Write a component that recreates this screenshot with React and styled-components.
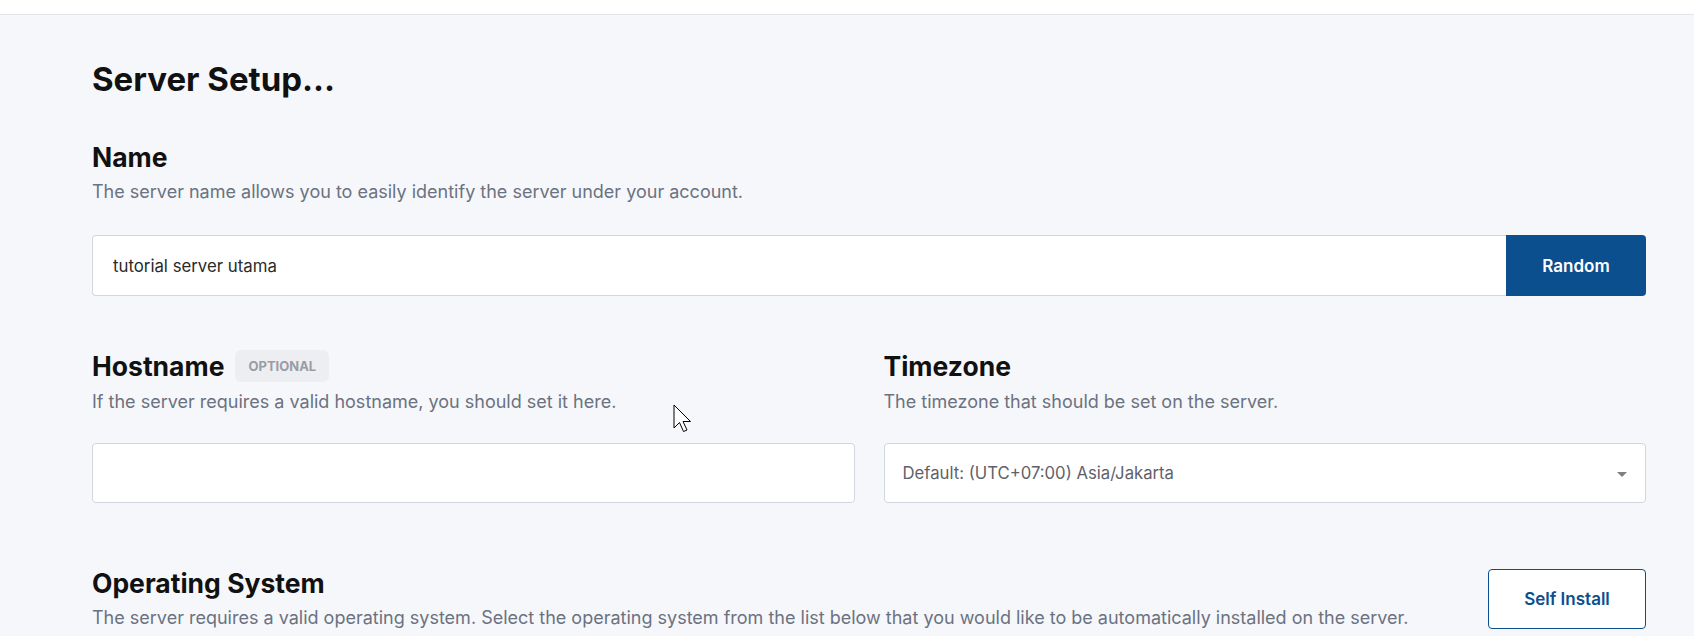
import React from "react";
import styled, { createGlobalStyle } from "styled-components";

const GlobalStyle = createGlobalStyle`
  html, body {
    margin: 0;
    padding: 0;
    background: #f6f7fb;
    font-family: Inter, "Noto Sans", sans-serif;
    color: #111111;
  }
  * { box-sizing: border-box; }
`;

const Page = styled.div`
  position: relative;
`;

const TopBar = styled.div`
  height: 15px;
  background: #ffffff;
  border-bottom: 1px solid #e2e4ea;
`;

const Main = styled.main`
  padding: 45px 48px 0 92px;
`;

const Title = styled.h1`
  margin: 0;
  font-size: 33px;
  line-height: 38px;
  font-weight: 700;
  color: #111111;
`;

const Section = styled.section`
  margin-top: ${(p) => p.$top}px;
`;

const HeaderRow = styled.div`
  display: flex;
  align-items: center;
  gap: 11px;
  height: ${(p) => (p.$tall ? "32px" : "auto")};
`;

const Heading = styled.h2`
  margin: 0;
  font-size: 26.5px;
  line-height: 29px;
  font-weight: 700;
  color: #111111;
`;

const Badge = styled.span`
  display: inline-flex;
  align-items: center;
  height: 32px;
  padding: 0 13px;
  border-radius: 6px;
  background: #eceef2;
  color: #9a9ca3;
  font-size: 13px;
  font-weight: 700;
`;

const Description = styled.p`
  margin: 8px 0 0;
  font-size: 18px;
  line-height: 24px;
  color: #6b7280;
`;

const FieldRow = styled.div`
  display: flex;
  margin-top: 31px;
  height: 61px;
`;

const TextInput = styled.input`
  flex: 1;
  min-width: 0;
  height: 100%;
  padding: 0 20px;
  border: 1px solid #d3d6dd;
  border-radius: ${(p) => (p.$joined ? "4px 0 0 4px" : "4px")};
  border-right: ${(p) => (p.$joined ? "none" : "1px solid #d3d6dd")};
  background: #ffffff;
  font-family: Inter, sans-serif;
  font-size: 16.8px;
  color: #2a2a2a;
  outline: none;
`;

const PrimaryButton = styled.button`
  width: 140px;
  height: 100%;
  border: none;
  border-radius: 0 4px 4px 0;
  background: #0b4f8f;
  color: #ffffff;
  font-family: Inter, sans-serif;
  font-size: 17px;
  font-weight: 600;
  cursor: pointer;
`;

const TwoCols = styled.div`
  display: grid;
  grid-template-columns: 1fr 1fr;
  column-gap: 29px;
  margin-top: 54px;
`;

const Column = styled.div`
  display: flex;
  flex-direction: column;
`;

const FieldBox = styled.div`
  margin-top: 29px;
  height: 60px;
  display: flex;
`;

const SelectBox = styled.div`
  flex: 1;
  display: flex;
  align-items: center;
  justify-content: space-between;
  padding: 0 18px;
  border: 1px solid #d3d6dd;
  border-radius: 4px;
  background: #ffffff;
  font-size: 16.7px;
  color: #5f6168;
`;

const Caret = styled.span`
  width: 0;
  height: 0;
  border-left: 5.5px solid transparent;
  border-right: 5.5px solid transparent;
  border-top: 5px solid #7d7f85;
  margin-top: 2px;
`;

const OsRow = styled.div`
  display: flex;
  justify-content: space-between;
  align-items: flex-start;
  margin-top: 66px;
`;

const OutlineButton = styled.button`
  width: 158px;
  height: 60px;
  border: 1px solid #0b4f8f;
  border-radius: 4px;
  background: #ffffff;
  color: #0b4f8f;
  font-family: Inter, sans-serif;
  font-size: 17px;
  font-weight: 600;
  cursor: pointer;
`;

const Pointer = styled.svg`
  position: absolute;
  left: 673px;
  top: 404px;
  pointer-events: none;
`;

export default function App() {
  return (
    <Page>
      <GlobalStyle />
      <TopBar />
      <Main>
        <Title>Server Setup...</Title>

        <Section $top={45}>
          <Heading>Name</Heading>
          <Description>
            The server name allows you to easily identify the server under your account.
          </Description>
          <FieldRow>
            <TextInput $joined defaultValue="tutorial server utama" />
            <PrimaryButton>Random</PrimaryButton>
          </FieldRow>
        </Section>

        <TwoCols>
          <Column>
            <HeaderRow $tall>
              <Heading>Hostname</Heading>
              <Badge>OPTIONAL</Badge>
            </HeaderRow>
            <Description>If the server requires a valid hostname, you should set it here.</Description>
            <FieldBox>
              <TextInput />
            </FieldBox>
          </Column>
          <Column>
            <HeaderRow $tall>
              <Heading>Timezone</Heading>
            </HeaderRow>
            <Description>The timezone that should be set on the server.</Description>
            <FieldBox>
              <SelectBox>
                <span>Default: (UTC+07:00) Asia/Jakarta</span>
                <Caret />
              </SelectBox>
            </FieldBox>
          </Column>
        </TwoCols>

        <OsRow>
          <div>
            <Heading>Operating System</Heading>
            <Description>
              The server requires a valid operating system. Select the operating system from the list below that you would like to be automatically installed on the server.
            </Description>
          </div>
          <OutlineButton>Self Install</OutlineButton>
        </OsRow>
      </Main>
      <Pointer width="20" height="30" viewBox="0 0 20 30">
        <path
          d="M1 1 L1 24 L6.5 18.5 L10.5 27.5 L14 26 L10 17.5 L17.5 17.5 Z"
          fill="#ffffff"
          stroke="#000000"
          strokeWidth="1"
          strokeLinejoin="miter"
        />
      </Pointer>
    </Page>
  );
}
